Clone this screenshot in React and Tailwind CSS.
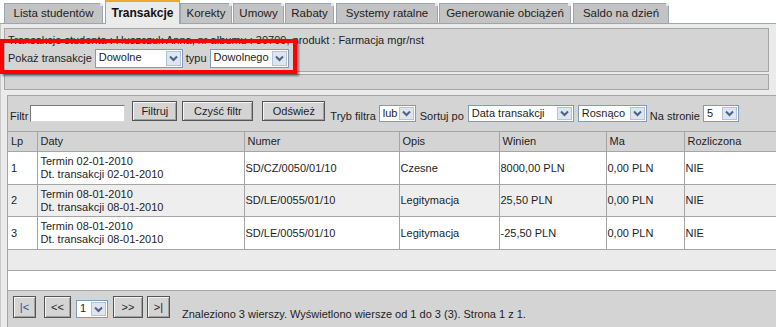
import React from 'react';

const tabs = [
  { label: 'Lista studentów', cls: 'ml-[4px] w-[99px]' },
  { label: 'Transakcje', cls: 'ml-[2px] w-[75px]', active: true },
  { label: 'Korekty', cls: 'ml-[0px] w-[52px]' },
  { label: 'Umowy', cls: 'ml-[1px] w-[51px]' },
  { label: 'Rabaty', cls: 'ml-[1px] w-[49px]' },
  { label: 'Systemy ratalne', cls: 'ml-[2px] w-[102px]' },
  { label: 'Generowanie obciążeń', cls: 'ml-[1px] w-[132px]' },
  { label: 'Saldo na dzień', cls: 'ml-[2px] w-[96px]' },
];

const rows = [
  { lp: 1, termin: '02-01-2010', dt: '02-01-2010', numer: 'SD/CZ/0050/01/10', opis: 'Czesne', winien: '8000,00 PLN', bg: 'bg-white', h: 'h-[33px]' },
  { lp: 2, termin: '08-01-2010', dt: '08-01-2010', numer: 'SD/LE/0055/01/10', opis: 'Legitymacja', winien: '25,50 PLN', bg: 'bg-[#eeeeee]', h: 'h-[32px]' },
  { lp: 3, termin: '08-01-2010', dt: '08-01-2010', numer: 'SD/LE/0055/01/10', opis: 'Legitymacja', winien: '-25,50 PLN', bg: 'bg-white', h: 'h-[33px]' },
];

function Chevron() {
  return (
    <svg width="9" height="7" viewBox="0 0 9 7">
      <path d="M1 1.5 L4.5 5 L8 1.5" fill="none" stroke="#4d6185" strokeWidth="2" />
    </svg>
  );
}

function Select({ value, className }) {
  return (
    <div className={`flex shrink-0 border border-[#7f9db9] bg-white ${className}`}>
      <span className="flex-1 overflow-hidden whitespace-nowrap pl-[3px] leading-[15px]">{value}</span>
      <span className="m-px flex w-[15px] shrink-0 items-center justify-center border border-[#b4c3dc] bg-[#dfe5ef]">
        <Chevron />
      </span>
    </div>
  );
}

function Btn({ children, className }) {
  return (
    <div
      className={`flex shrink-0 items-center justify-center border border-[#555] bg-[#d4d4d4] shadow-[inset_1px_1px_0_#f4f4f4,inset_-1px_-1px_0_#a0a0a0] ${className}`}
    >
      {children}
    </div>
  );
}

export default function App() {
  return (
    <div className="relative h-[327px] w-[776px] overflow-hidden bg-white font-['Liberation_Sans',Arial,sans-serif] text-[11px] text-[#1e1e1e]">
      {/* zakładki */}
      <div className="flex h-[24px] items-end border-b border-[#9aa6b0]">
        {tabs.map((t) =>
          t.active ? (
            <div
              key={t.label}
              className={`-mb-px flex h-[24px] items-center justify-center border-x border-t-2 border-x-[#9aa6b0] border-t-[#f2a733] bg-[#ebebeb] text-[12px] font-bold text-[#111] ${t.cls}`}
            >
              {t.label}
            </div>
          ) : (
            <div
              key={t.label}
              className={`relative flex h-[20px] items-center justify-center border-x border-t border-[#9aa6b0] bg-[#c3c3c3] text-[11.5px] text-[#222] ${t.cls}`}
            >
              {t.label}
              <span className="absolute -right-px -top-px h-[3px] w-[3px] bg-[#e8e8e8]" />
            </div>
          )
        )}
      </div>

      <div className="h-[303px] border-l border-[#c8c8c8] bg-[#ebebeb] pt-[4px]">
        {/* dane studenta */}
        <div className="ml-[3px] h-[44px] w-[765px] border border-[#a5a5a5] bg-[#d4d4d4] px-[3px]">
          <div className="pt-[5px] leading-[13px]">
            Transakcje studenta : Huszczuk Anna, nr albumu : 30709, produkt : Farmacja mgr/nst
          </div>
          <div className="mt-[2px] flex items-center">
            <span className="mr-[3px]">Pokaż transakcje</span>
            <Select value="Dowolne" className="h-[19px] w-[88px]" />
            <span className="mx-[3px]">typu</span>
            <Select value="Dowolnego" className="h-[19px] w-[79px]" />
          </div>
        </div>

        <div className="ml-[3px] mt-[2px] h-[16px] w-[765px] border border-[#a5a5a5] bg-[#d4d4d4]" />

        {/* lista transakcji */}
        <div className="ml-[6px] mt-[5px] border-l border-t border-[#a5a5a5] bg-[#d4d4d4]">
          <div className="flex h-[35px] items-end pb-[9px] pl-[2px]">
            <span className="mr-[2px] leading-[12px]">Filtr</span>
            <div className="h-[17px] w-[95px] shrink-0 border border-[#7a7a7a] border-b-[#d8d8d8] border-r-[#d8d8d8] bg-white" />
            <Btn className="mb-[1px] ml-[7px] h-[20px] w-[45px]">Filtruj</Btn>
            <Btn className="mb-[1px] ml-[5px] h-[20px] w-[71px]">Czyść filtr</Btn>
            <Btn className="mb-[1px] ml-[9px] h-[20px] w-[63px]">Odśwież</Btn>
            <span className="ml-[5px] mr-[3px] leading-[11px]">Tryb filtra</span>
            <Select value="lub" className="h-[17px] w-[37px]" />
            <span className="ml-[4px] mr-[4px] leading-[11px]">Sortuj po</span>
            <Select value="Data transakcji" className="h-[17px] w-[106px]" />
            <Select value="Rosnąco" className="ml-[4px] h-[17px] w-[69px]" />
            <span className="ml-[3px] mr-[3px] leading-[11px]">Na stronie</span>
            <Select value="5" className="h-[17px] w-[36px]" />
          </div>

          <table className="w-[770px] table-fixed border-collapse">
            <colgroup>
              <col className="w-[29px]" />
              <col className="w-[207px]" />
              <col className="w-[155px]" />
              <col className="w-[100px]" />
              <col className="w-[107px]" />
              <col className="w-[78px]" />
              <col className="w-[94px]" />
            </colgroup>
            <thead>
              <tr className="h-[20px] bg-[#d4d4d4] text-left">
                {['Lp', 'Daty', 'Numer', 'Opis', 'Winien', 'Ma', 'Rozliczona'].map((h) => (
                  <th key={h} className="border border-[#a5a5a5] px-[3px] py-0 font-normal first:border-l-0">
                    {h}
                  </th>
                ))}
              </tr>
            </thead>
            <tbody>
              {rows.map((r) => (
                <tr key={r.lp} className={`${r.bg} ${r.h}`}>
                  <td className="border border-l-0 border-[#a5a5a5] px-[3px]">{r.lp}</td>
                  <td className="border border-[#a5a5a5] px-[3px] leading-[13px]">
                    Termin {r.termin}
                    <br />
                    Dt. transakcji {r.dt}
                  </td>
                  <td className="border border-[#a5a5a5] px-[1px]">{r.numer}</td>
                  <td className="border border-[#a5a5a5] px-[1px]">{r.opis}</td>
                  <td className="border border-[#a5a5a5] px-[1px]">{r.winien}</td>
                  <td className="border border-[#a5a5a5] px-[1px]">0,00 PLN</td>
                  <td className="border border-[#a5a5a5] px-[1px]">NIE</td>
                </tr>
              ))}
            </tbody>
          </table>

          <div className="h-[21px] border-b border-[#a5a5a5] bg-[#ebebeb]" />
          <div className="h-[20px] border-b border-[#a5a5a5] bg-white" />

          {/* stronicowanie */}
          <div className="flex h-[40px] items-start pl-[5px] pt-[5px]">
            <Btn className="h-[22px] w-[23px] text-[#2b4f9a]">|&lt;</Btn>
            <Btn className="ml-[8px] h-[22px] w-[27px]">&lt;&lt;</Btn>
            <Select value="1" className="ml-[5px] mt-[4px] h-[18px] w-[32px]" />
            <Btn className="ml-[5px] h-[22px] w-[30px]">&gt;&gt;</Btn>
            <Btn className="ml-[4px] h-[22px] w-[23px]">&gt;|</Btn>
            <span className="ml-[12px] mt-[10px]">
              Znaleziono 3 wierszy. Wyświetlono wiersze od 1 do 3 (3). Strona 1 z 1.
            </span>
          </div>
        </div>
      </div>

      {/* zaznaczenie */}
      <div className="pointer-events-none absolute left-0 top-[39px] h-[35px] w-[297px] border-4 border-[#ff0000] shadow-[2px_2px_2px_rgba(0,0,0,0.45)]" />
    </div>
  );
}
